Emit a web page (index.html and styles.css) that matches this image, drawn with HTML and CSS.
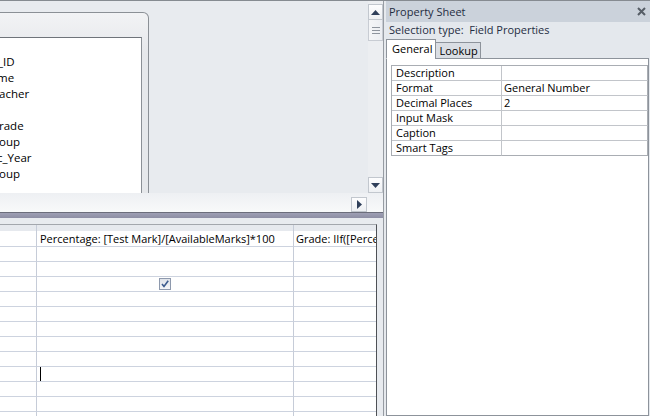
FILE: index.html
```html
<!DOCTYPE html>
<html>
<head>
<meta charset="utf-8">
<title>Query Design</title>
<link rel="stylesheet" href="styles.css">
</head>
<body>
<div class="app">
  <div class="main">
    <div class="upper">
      <div class="design">
        <div class="field-list">
          <div class="fl-head"></div>
          <div class="fl-body">
            <ul class="fields">
              <li class="f0">*</li>
              <li class="f1">_ID</li>
              <li class="f2">me</li>
              <li class="f3">acher</li>
              <li class="f4"></li>
              <li class="f5">rade</li>
              <li class="f6">oup</li>
              <li class="f7">c_Year</li>
              <li class="f8">oup</li>
            </ul>
          </div>
        </div>
      </div>
      <div class="vscroll">
        <div class="sbtn up"><svg width="9" height="5" viewBox="0 0 9 5"><path d="M0 5 L4.5 0 L9 5 Z" fill="#2f3f5a"/></svg></div>
        <div class="thumb"><span></span><span></span><span></span></div>
        <div class="vtrack"></div>
        <div class="sbtn down"><svg width="9" height="5" viewBox="0 0 9 5"><path d="M0 0 L4.5 5 L9 0 Z" fill="#2f3f5a"/></svg></div>
      </div>
      <div class="hscroll">
        <div class="sbtn right"><svg width="5" height="9" viewBox="0 0 5 9"><path d="M0 0 L5 4.5 L0 9 Z" fill="#2f3f5a"/></svg></div>
      </div>
      <div class="corner"></div>
    </div>
    <div class="splitter"></div>
    <div class="gap"></div>
    <div class="grid">
      <div class="c c0 hd"></div><div class="c c1 hd"></div><div class="c c2 hd"></div>
      <div class="c c0 r1"></div><div class="c c1 r1 txt">Percentage: [Test Mark]/[AvailableMarks]*100</div><div class="c c2 r1 txt">Grade: IIf([Percentage]&gt;=80,"A",IIf([Percentage]&gt;=70,"B","C"))</div>
      <div class="c c0"></div><div class="c c1"></div><div class="c c2"></div>
      <div class="c c0"></div><div class="c c1"></div><div class="c c2"></div>
      <div class="c c0"></div><div class="c c1 chk"><span class="checkbox"><svg width="10" height="10" viewBox="0 0 10 10"><path d="M2 5 L4 7.5 L8.2 1.8" fill="none" stroke="#3d5c8f" stroke-width="1.6"/></svg></span></div><div class="c c2"></div>
      <div class="c c0"></div><div class="c c1"></div><div class="c c2"></div>
      <div class="c c0"></div><div class="c c1"></div><div class="c c2"></div>
      <div class="c c0"></div><div class="c c1"></div><div class="c c2"></div>
      <div class="c c0"></div><div class="c c1"></div><div class="c c2"></div>
      <div class="c c0"></div><div class="c c1"></div><div class="c c2"></div>
      <div class="c c0"></div><div class="c c1 cur"><span class="caret"></span></div><div class="c c2"></div>
      <div class="c c0"></div><div class="c c1"></div><div class="c c2"></div>
      <div class="c c0"></div><div class="c c1"></div><div class="c c2"></div>
      <div class="c c0"></div><div class="c c1"></div><div class="c c2"></div>
    </div>
  </div>
  <div class="divider"></div>
  <div class="props">
    <div class="ps-title">
      <span>Property Sheet</span>
      <svg class="close" width="9" height="9" viewBox="0 0 9 9"><path d="M1 1 L8 8 M8 1 L1 8" stroke="#565d66" stroke-width="2"/></svg>
    </div>
    <div class="ps-sel">Selection type:&nbsp; Field Properties</div>
    <div class="ps-tabs">
      <div class="tab active">General</div>
      <div class="tab">Lookup</div>
    </div>
    <div class="ps-panel">
      <div class="ptable">
        <div class="pl">Description</div><div class="pv"></div>
        <div class="pl">Format</div><div class="pv">General Number</div>
        <div class="pl">Decimal Places</div><div class="pv">2</div>
        <div class="pl">Input Mask</div><div class="pv"></div>
        <div class="pl">Caption</div><div class="pv"></div>
        <div class="pl">Smart Tags</div><div class="pv"></div>
      </div>
    </div>
  </div>
</div>
</body>
</html>
```
FILE: styles.css
```css
* { box-sizing: border-box; margin: 0; padding: 0; }
html, body { width: 650px; height: 416px; overflow: hidden; }
body {
  font-family: "Open Sans", "Noto Sans", sans-serif;
  font-size: 11px;
  color: #000;
  background: #e8ebef;
}
.app {
  display: flex;
  height: 416px;
  border-top: 1px solid #868b91;
}
.main {
  width: 383px;
  display: flex;
  flex-direction: column;
  overflow: hidden;
}
.upper {
  display: grid;
  grid-template-columns: 368px 15px;
  grid-template-rows: 192px 19px;
}
.design {
  overflow: hidden;
  padding-top: 11px;
  background: #e8ebef;
}
.field-list {
  width: 149px;
  height: 260px;
  border: 1px solid #8b9096;
  border-left: none;
  border-top-right-radius: 6px;
  background: linear-gradient(#f2f3f5, #e6e8eb 40px, #e6e8eb);
  padding-right: 6px;
}
.fl-head { height: 24px; }
.fl-body {
  height: 240px;
  background: #fff;
  border-top: 1px solid #6f747a;
  border-right: 1px solid #8b9096;
  overflow: hidden;
}
.fields { list-style: none; }
.fields li {
  height: 16px;
  line-height: 16px;
  font-size: 11.5px;
  white-space: nowrap;
  color: #000;
}
.f0 { margin-left: -20px; }
.f1 { margin-left: -2px; }
.f2 { margin-left: -3px; }
.f3 { margin-left: -1px; }
.f5 { margin-left: -1px; }
.f6 { margin-left: -1px; }
.f7 { margin-left: -3px; }
.f8 { margin-left: -1px; }

.vscroll {
  display: flex;
  flex-direction: column;
  align-items: center;
  background: #eceef1;
  padding: 3px 0 0 0;
}
.sbtn {
  width: 15px;
  height: 16px;
  border: 1px solid #c2c7ce;
  background: linear-gradient(#fdfdfe, #eef0f3);
  display: flex;
  align-items: center;
  justify-content: center;
}
.thumb {
  width: 15px;
  height: 21px;
  border: 1px solid #c8ccd3;
  border-top: none;
  background: linear-gradient(90deg, #f4f5f7, #eceef2);
  display: flex;
  flex-direction: column;
  align-items: center;
  justify-content: center;
  gap: 2px;
}
.thumb span {
  display: block;
  width: 8px;
  height: 1px;
  background: #8e949d;
}
.vtrack { flex: 1; }
.hscroll {
  background: linear-gradient(#eef0f3, #f8f9fa);
  display: flex;
  justify-content: flex-end;
  align-items: flex-start;
  padding: 4px 1px 0 0;
}
.hscroll .sbtn { width: 16px; height: 15px; }
.corner { background: linear-gradient(#eef0f3, #f8f9fa); }

.splitter {
  height: 6px;
  background: linear-gradient(#6b6d7b 0, #6b6d7b 1px, #9e9fb4 1px, #8d8ea4 100%);
}
.gap { height: 6px; background: #e8ebef; }

.grid {
  width: 377px;
  flex: 1;
  background: #fff;
  border-top: 1px solid #a3a7ad;
  border-right: 1px solid #4e5156;
  display: grid;
  grid-template-columns: 37px 257px 1fr;
  grid-auto-rows: 15px;
  grid-template-rows: 6px 16px;
  overflow: hidden;
}
.c {
  border-bottom: 1px solid #cdd3df;
  white-space: nowrap;
  overflow: hidden;
  font-size: 11px;
  line-height: 14px;
}
.c0, .c1 { border-right: 1px solid #c6ccd8; }
.hd { background: #e6e9ee; border-bottom: none; }
.r1 { line-height: 15px; }
.c1.txt { padding-left: 3px; }
.c2.txt { padding-left: 2px; }
.chk { display: flex; align-items: center; justify-content: center; }
.checkbox {
  width: 12px;
  height: 12px;
  border: 1px solid #8e99ad;
  background: linear-gradient(#dfe3ea, #f5f6f8);
  display: flex;
  align-items: center;
  justify-content: center;
}
.cur { padding-left: 3px; }
.caret { display: block; width: 1px; height: 14px; background: #000; }

.divider {
  width: 3px;
  border-left: 1px solid #979ca3;
  background: #e6e9ed;
}
.props {
  flex: 1;
  display: flex;
  flex-direction: column;
  background: #e4e8ed;
}
.ps-title {
  height: 21px;
  background: #cbd2db;
  display: flex;
  align-items: center;
  justify-content: space-between;
  padding: 0 4px 0 3px;
  font-size: 11px;
  color: #1f2d42;
}
.ps-sel {
  height: 16px;
  line-height: 16px;
  padding-left: 3px;
  font-size: 11px;
  color: #1f2d42;
}
.ps-tabs {
  height: 21px;
  display: flex;
  align-items: flex-end;
  position: relative;
  z-index: 1;
  margin-bottom: -1px;
}
.tab {
  font-size: 11px;
  border: 1px solid #8d939b;
  padding: 0 2px 0 3px;
  line-height: 15px;
  height: 17px;
  background: #dadee4;
  margin-left: -1px;
}
.tab.active {
  margin-left: 0;
  height: 20px;
  line-height: 18px;
  background: #fff;
  border-bottom-color: #fff;
  padding: 0 3px 0 5px;
}
.ps-panel {
  flex: 1;
  background: #fff;
  border: 1px solid #8d939b;
  margin-right: 1px;
  padding: 6px 0 0 4px;
}
.ptable {
  display: grid;
  grid-template-columns: 110px 146px;
  grid-auto-rows: 15px;
  border-top: 1px solid #a9adb3;
  border-left: 1px solid #a9adb3;
}
.pl, .pv {
  border-right: 1px solid #c2c5ca;
  border-bottom: 1px solid #c2c5ca;
  font-size: 11px;
  line-height: 14px;
  white-space: nowrap;
  overflow: hidden;
}
.pl { padding-left: 4px; }
.pv { padding-left: 2px; border-right-color: #a9adb3; }
.pl:nth-last-child(2), .pv:last-child { border-bottom-color: #a9adb3; }
```
